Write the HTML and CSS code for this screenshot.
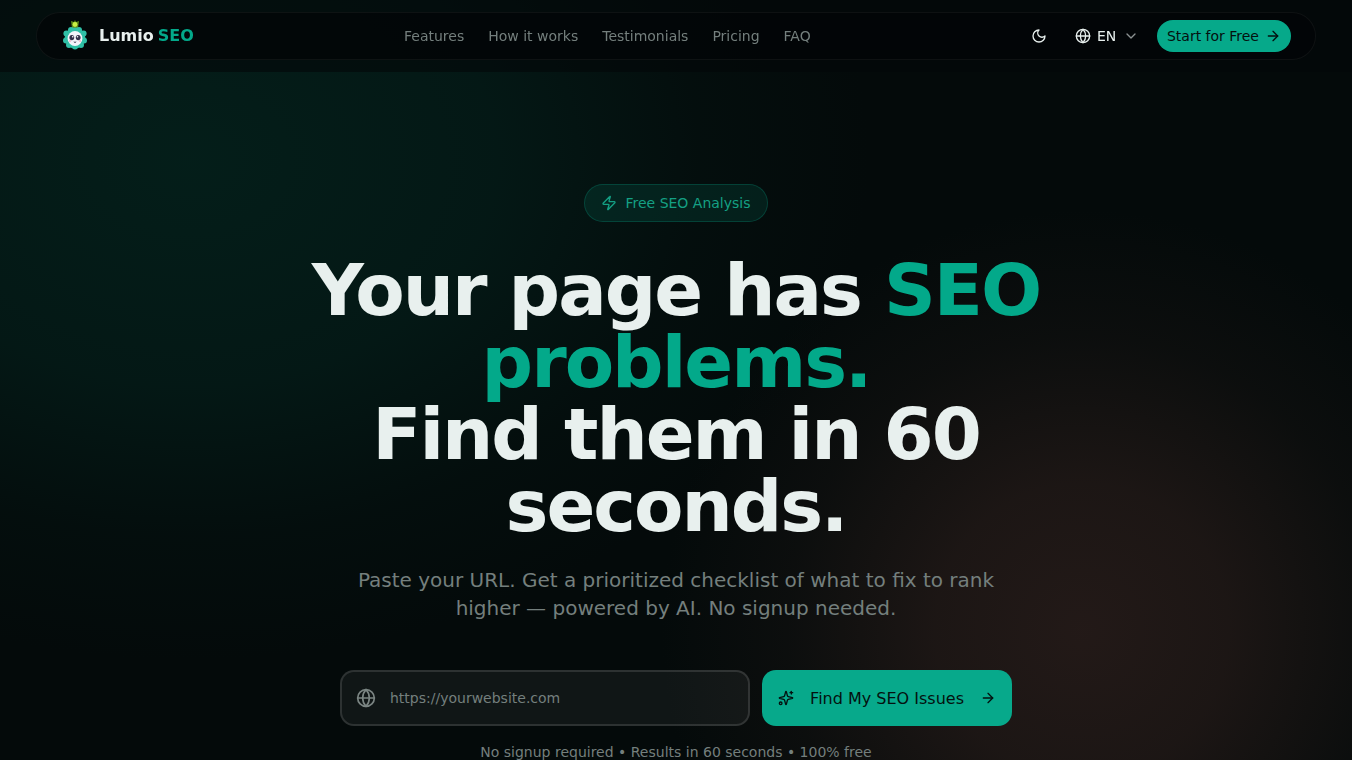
FILE: index.html
```html
<!DOCTYPE html>
<html lang="en">
<head>
  <meta charset="UTF-8" />
  <meta name="viewport" content="width=device-width, initial-scale=1.0"/>
  <title>Lumio SEO</title>
  <link rel="stylesheet" href="styles.css">
</head>
<body>
  <header class="site-header">
    <div class="navbar">
      <a href="#" class="logo">
        <svg class="logo-icon" viewBox="0 0 30 30" aria-hidden="true">
          <path d="M10 0l3 1 1-2 1 2 3-1-1 7h-6z" fill="#5d8a18"/>
          <circle cx="14" cy="3.5" r="2.4" fill="#c9ee45"/>
          <g fill="#2fbfa6">
            <circle cx="14" cy="17" r="10.4"/>
            <circle cx="14" cy="25.5" r="3"/>
            <circle cx="8" cy="24" r="3"/>
            <circle cx="20" cy="24" r="3"/>
            <circle cx="5" cy="19.5" r="3"/>
            <circle cx="23" cy="19.5" r="3"/>
            <circle cx="5.4" cy="12.6" r="3"/>
            <circle cx="22.6" cy="12.6" r="3"/>
            <circle cx="10" cy="9" r="3"/>
            <circle cx="18" cy="9" r="3"/>
          </g>
          <circle cx="14" cy="17.5" r="7.4" fill="#f4f3fa"/>
          <ellipse cx="10.8" cy="16.6" rx="2.4" ry="2.6" fill="#34304a"/>
          <ellipse cx="17.2" cy="16.6" rx="2.4" ry="2.6" fill="#34304a"/>
          <circle cx="11.7" cy="15.8" r=".8" fill="#fff"/>
          <circle cx="16.5" cy="15.8" r=".8" fill="#fff"/>
          <circle cx="9" cy="20" r="1" fill="#f3b6c6"/>
          <circle cx="19" cy="20" r="1" fill="#f3b6c6"/>
          <path d="M12.8 20.8q1.2 1.4 2.4 0" fill="none" stroke="#34304a" stroke-width=".9"/>
        </svg>
        <span class="logo-text"><span>Lumio</span> <span class="accent">SEO</span></span>
      </a>

      <nav class="nav-links">
        <a href="#features">Features</a>
        <a href="#how">How it works</a>
        <a href="#testimonials">Testimonials</a>
        <a href="#pricing">Pricing</a>
        <a href="#faq">FAQ</a>
      </nav>

      <div class="nav-actions">
        <button class="theme-btn" type="button" aria-label="Toggle theme">
          <svg class="icon" viewBox="0 0 24 24"><path d="M12 3a6 6 0 0 0 9 9 9 9 0 1 1-9-9Z"/></svg>
        </button>
        <label class="lang">
          <svg class="icon" viewBox="0 0 24 24"><circle cx="12" cy="12" r="10"/><path d="M12 2a14.5 14.5 0 0 0 0 20 14.5 14.5 0 0 0 0-20"/><path d="M2 12h20"/></svg>
          <select class="lang-select" aria-label="Language">
            <option>EN</option>
          </select>
          <svg class="icon chevron" viewBox="0 0 24 24"><path d="m6 9 6 6 6-6"/></svg>
        </label>
        <a href="#start" class="start-btn">Start for Free
          <svg class="icon" viewBox="0 0 24 24"><path d="M5 12h14"/><path d="m12 5 7 7-7 7"/></svg>
        </a>
      </div>
    </div>
  </header>

  <main class="hero">
    <div class="badge">
      <svg class="icon" viewBox="0 0 24 24"><path d="M4 14a1 1 0 0 1-.78-1.63l9.9-10.2a.5.5 0 0 1 .86.46l-1.92 6.02A1 1 0 0 0 13 10h7a1 1 0 0 1 .78 1.63l-9.9 10.2a.5.5 0 0 1-.86-.46l1.92-6.02A1 1 0 0 0 11 14z"/></svg>
      <span>Free SEO Analysis</span>
    </div>

    <h1>Your page has <span class="accent">SEO problems.</span><br>Find them in 60 seconds.</h1>

    <p class="subtitle">Paste your URL. Get a prioritized checklist of what to fix to rank higher — powered by AI. No signup needed.</p>

    <form class="url-form">
      <label class="url-field">
        <svg class="icon" viewBox="0 0 24 24"><circle cx="12" cy="12" r="10"/><path d="M12 2a14.5 14.5 0 0 0 0 20 14.5 14.5 0 0 0 0-20"/><path d="M2 12h20"/></svg>
        <input type="url" placeholder="https://yourwebsite.com" aria-label="Website URL">
      </label>
      <button class="submit-btn" type="submit">
        <svg class="icon" viewBox="0 0 24 24"><path d="M9.937 15.5A2 2 0 0 0 8.5 14.063l-6.135-1.582a.5.5 0 0 1 0-.962L8.5 9.936A2 2 0 0 0 9.937 8.5l1.582-6.135a.5.5 0 0 1 .963 0L14.063 8.5A2 2 0 0 0 15.5 9.937l6.135 1.581a.5.5 0 0 1 0 .964L15.5 14.063a2 2 0 0 0-1.437 1.437l-1.582 6.135a.5.5 0 0 1-.963 0z"/><path d="M20 2v4"/><path d="M22 4h-4"/><circle cx="4" cy="20" r="2"/></svg>
        <span>Find My SEO Issues</span>
        <svg class="icon" viewBox="0 0 24 24"><path d="M5 12h14"/><path d="m12 5 7 7-7 7"/></svg>
      </button>
    </form>

    <p class="note">No signup required • Results in 60 seconds • 100% free</p>
  </main>
</body>
</html>
```
FILE: styles.css
```css
* {
  box-sizing: border-box;
}

body {
  margin: 0;
  font-family: "DejaVu Sans", sans-serif;
  font-size: 14px;
  line-height: 20px;
  color: #e8f0ee;
  background-color: #040a0a;
}

a {
  color: inherit;
  text-decoration: none;
}

.accent {
  color: #03a98a;
}

.icon {
  width: 16px;
  height: 16px;
  flex-shrink: 0;
  fill: none;
  stroke: currentColor;
  stroke-width: 2;
  stroke-linecap: round;
  stroke-linejoin: round;
}

/* Header */
.site-header {
  position: fixed;
  top: 0;
  left: 0;
  right: 0;
  z-index: 10;
  padding: 12px 16px;
  background: rgba(3, 7, 8, 0.6);
}

.navbar {
  max-width: 1280px;
  height: 48px;
  margin: 0 auto;
  padding: 0 24px;
  display: flex;
  align-items: center;
  justify-content: space-between;
  border: 1px solid rgba(255, 255, 255, 0.05);
  border-radius: 24px;
  background: rgba(3, 6, 8, 0.8);
}

.logo {
  display: flex;
  align-items: center;
  gap: 8px;
}

.logo-icon {
  width: 30px;
  height: 30px;
  overflow: visible;
}

.logo-text {
  display: flex;
  gap: 4px;
  font-size: 16px;
  font-weight: bold;
}

.nav-links {
  display: flex;
  gap: 24px;
  color: #747f7d;
}

.nav-links a:hover {
  color: #e8f0ee;
}

.nav-actions {
  display: flex;
  align-items: center;
  gap: 8px;
}

.theme-btn {
  width: 36px;
  height: 36px;
  padding: 0;
  display: flex;
  align-items: center;
  justify-content: center;
  border: none;
  border-radius: 50%;
  background: none;
  color: inherit;
  cursor: pointer;
}

.lang {
  display: flex;
  align-items: center;
  gap: 6px;
  padding: 0 10px;
}

.lang-select {
  appearance: none;
  padding: 0;
  border: none;
  background: none;
  color: inherit;
  font: inherit;
}

.chevron {
  opacity: 0.6;
}

.start-btn {
  display: flex;
  align-items: center;
  gap: 6px;
  height: 32px;
  padding: 0 10px;
  border-radius: 16px;
  background: #06a98a;
  color: #04110f;
}

/* Hero */
.hero {
  min-height: 100vh;
  padding: 184px 16px 64px;
  display: flex;
  flex-direction: column;
  align-items: center;
  text-align: center;
  background:
    radial-gradient(ellipse 680px 500px at 14% 160px, rgba(4, 32, 27, 0.9), rgba(4, 30, 26, 0.7) 45%, rgba(4, 20, 18, 0.4) 75%, transparent),
    radial-gradient(ellipse 420px 420px at 80% 630px, rgba(38, 27, 25, 0.9), rgba(34, 25, 23, 0.8) 35%, rgba(22, 19, 18, 0.45) 70%, transparent),
    #040a0a;
}

.badge {
  display: flex;
  align-items: center;
  gap: 8px;
  padding: 8px 16px;
  border: 1px solid rgba(6, 169, 138, 0.25);
  border-radius: 19px;
  background: rgba(6, 169, 138, 0.12);
  color: #14a084;
}

h1 {
  max-width: 896px;
  margin: 32px 0 24px;
  font-size: 72px;
  line-height: 72px;
  letter-spacing: -2px;
}

.subtitle {
  max-width: 672px;
  margin: 0 0 48px;
  font-size: 20px;
  line-height: 28px;
  color: #747f7d;
}

.url-form {
  width: 100%;
  max-width: 672px;
  display: flex;
  gap: 12px;
}

.url-field {
  flex: 1;
  height: 56px;
  padding: 0 14px;
  display: flex;
  align-items: center;
  gap: 14px;
  border: 2px solid rgba(255, 255, 255, 0.12);
  border-radius: 14px;
  background: rgba(255, 255, 255, 0.05);
  color: #7b8583;
}

.url-field .icon {
  width: 20px;
  height: 20px;
}

.url-field input {
  flex: 1;
  min-width: 0;
  padding: 0;
  border: none;
  outline: none;
  background: none;
  color: #e8f0ee;
  font: inherit;
}

.url-field input::placeholder {
  color: #747f7d;
}

.submit-btn {
  height: 56px;
  padding: 0 16px;
  display: flex;
  align-items: center;
  gap: 16px;
  border: none;
  border-radius: 14px;
  background: #07a98b;
  color: #04110f;
  font-family: inherit;
  font-size: 16px;
  cursor: pointer;
}

.note {
  margin: 16px 0 0;
  color: #747f7d;
}
```
